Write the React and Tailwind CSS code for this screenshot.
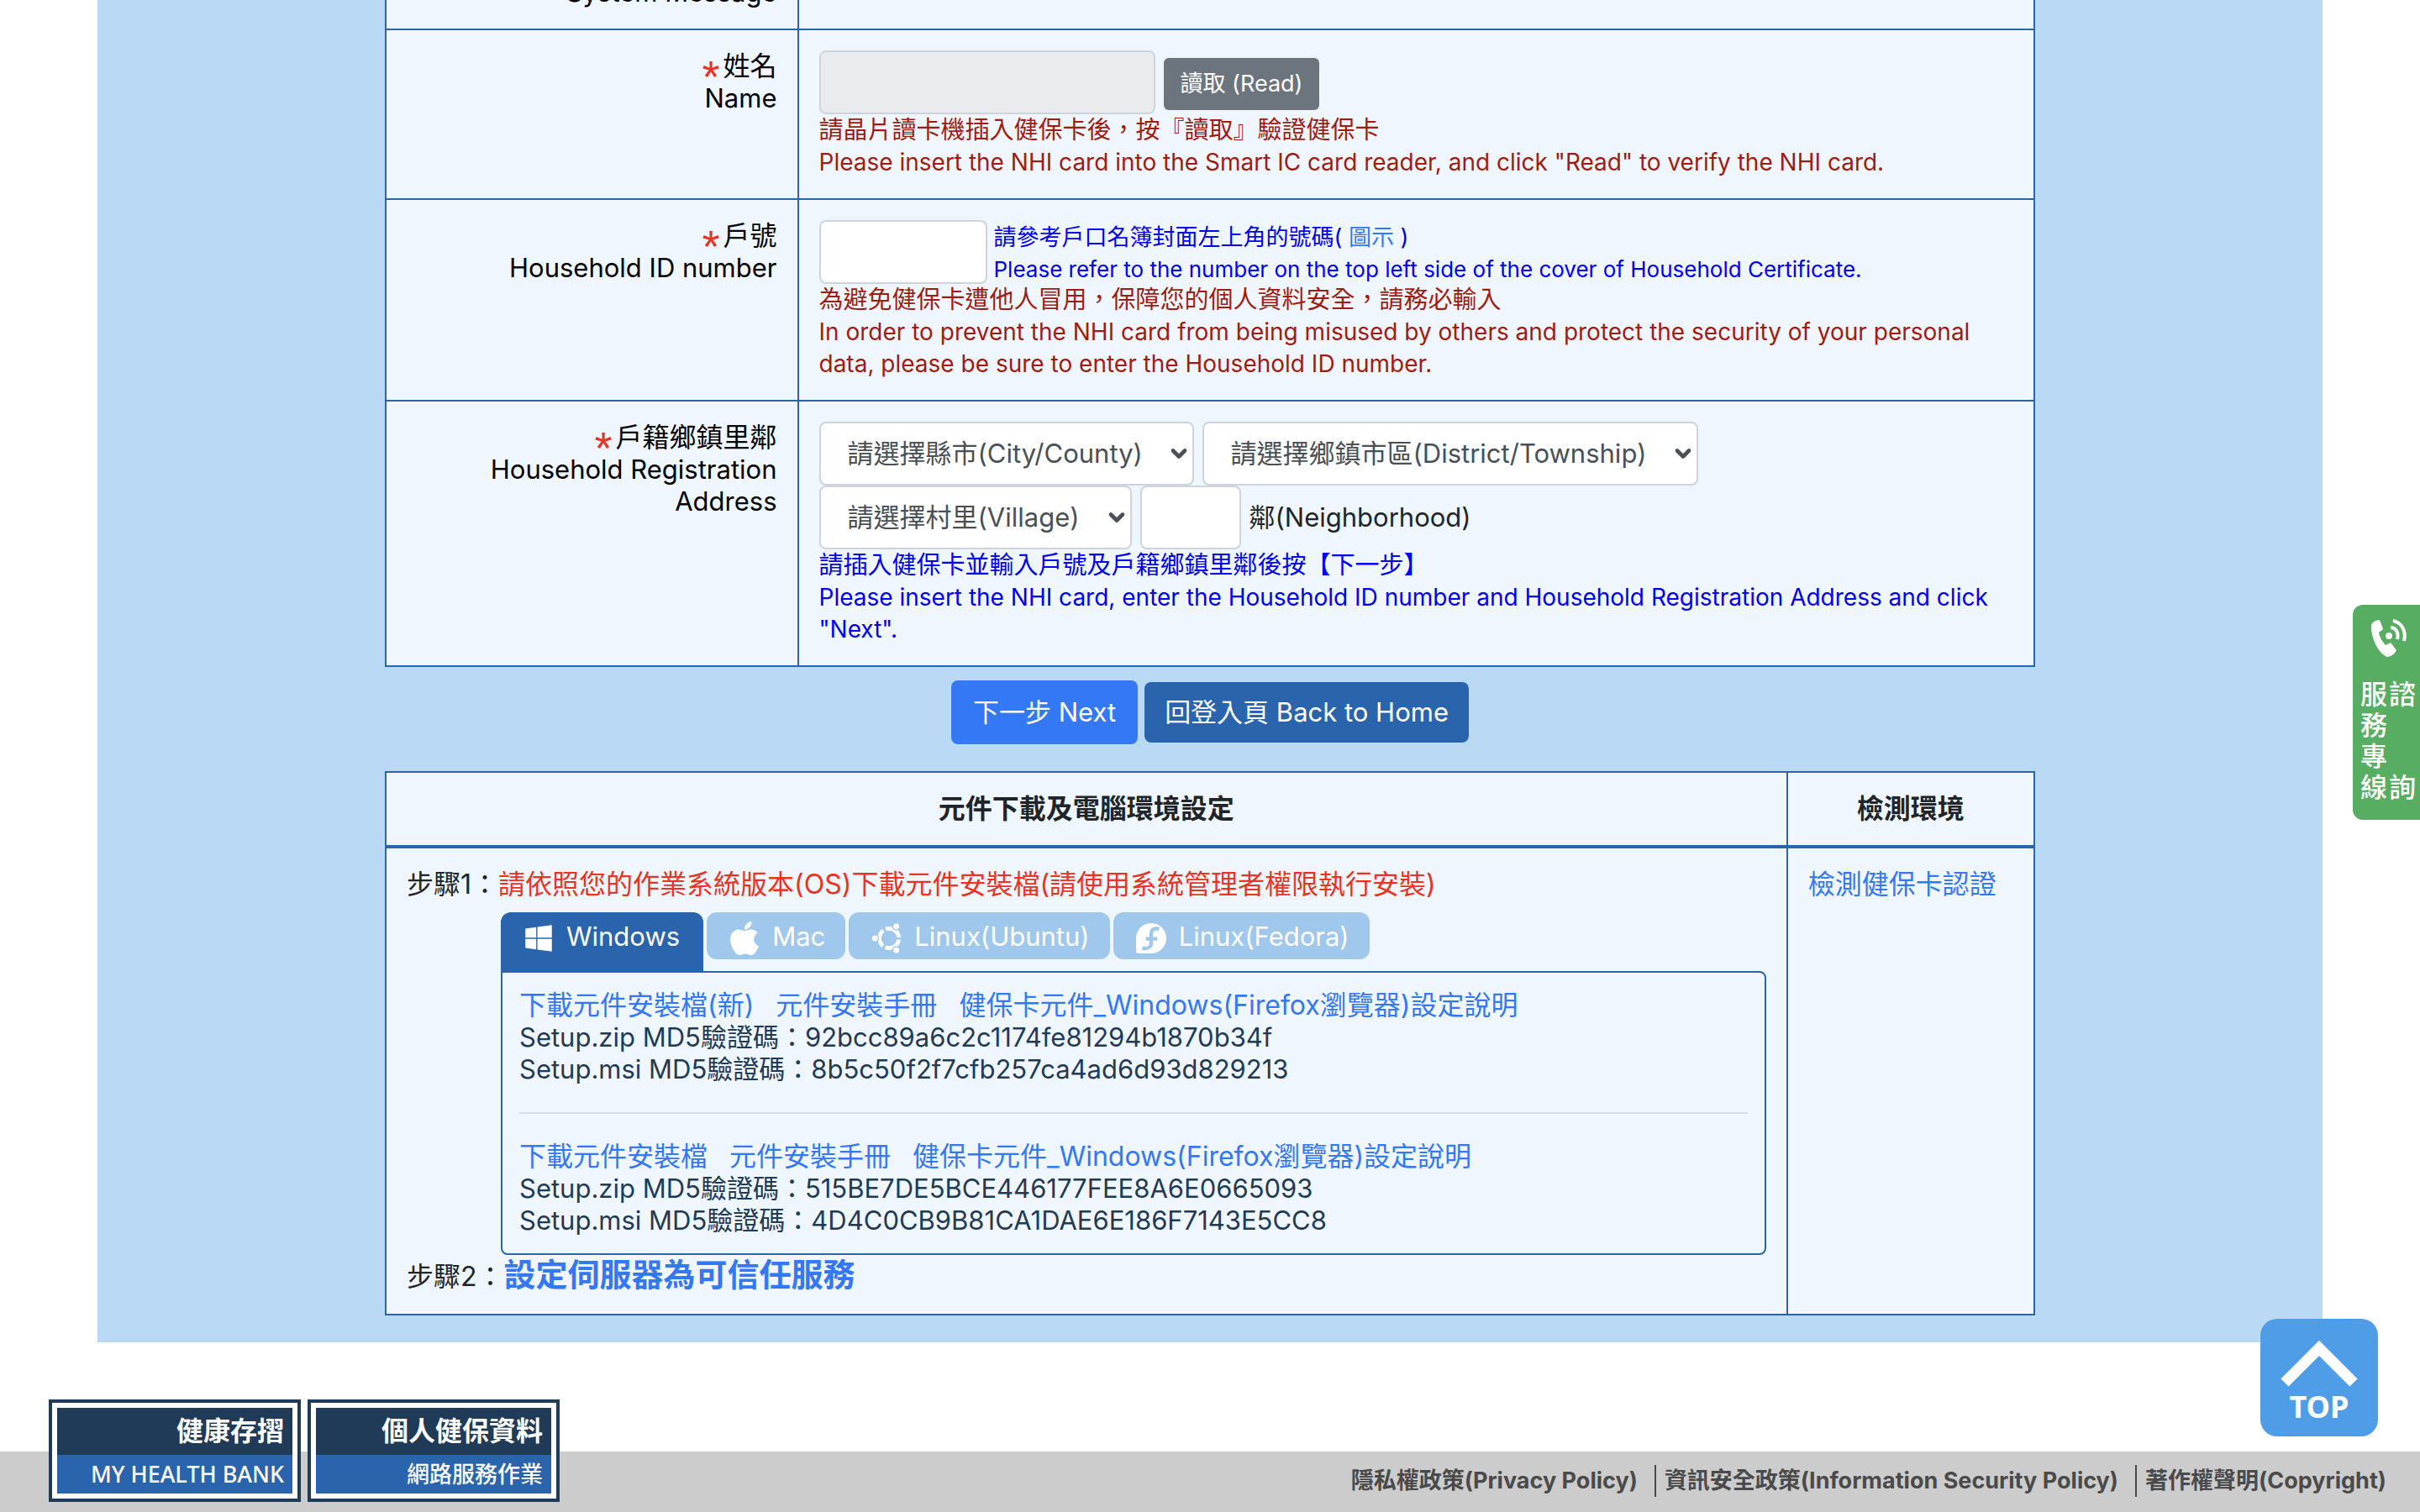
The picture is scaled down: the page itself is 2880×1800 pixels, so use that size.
import { FaApple, FaWindows } from "react-icons/fa";
import { FiChevronDown } from "react-icons/fi";

function UbuntuIcon({ className }) {
  return (
    <svg viewBox="0 0 34 34" className={className} fill="none">
      <circle
        cx="20"
        cy="17"
        r="11"
        stroke="currentColor"
        strokeWidth="4.5"
        strokeDasharray="20 3.04"
        strokeDashoffset="-1.5"
      />
      <g fill="currentColor" stroke="#9fc8ec" strokeWidth="1.5">
        <circle cx="4" cy="17" r="4" />
        <circle cx="28" cy="3.5" r="4" />
        <circle cx="28" cy="30.5" r="4" />
      </g>
    </svg>
  );
}

function FedoraIcon({ className }) {
  return (
    <svg viewBox="0 0 34 34" className={className} fill="none">
      <path
        d="M17 0a17 17 0 1 1 0 34H3a3 3 0 0 1-3-3V17A17 17 0 0 1 17 0Z"
        fill="currentColor"
      />
      <path
        d="M26 6.500c-6-1.500-9 1-9 6V22c0 5-4 7.500-10 6M11 17.500h13"
        stroke="#9fc8ec"
        strokeWidth="4"
      />
    </svg>
  );
}

const TABS = [
  { id: "windows", label: "Windows", icon: FaWindows },
  { id: "mac", label: "Mac", icon: FaApple },
  { id: "ubuntu", label: "Linux(Ubuntu)", icon: UbuntuIcon },
  { id: "fedora", label: "Linux(Fedora)", icon: FedoraIcon },
];

const DOWNLOADS = [
  {
    file: "下載元件安裝檔(新)",
    zip: "92bcc89a6c2c1174fe81294b1870b34f",
    msi: "8b5c50f2f7cfb257ca4ad6d93d829213",
  },
  {
    file: "下載元件安裝檔",
    zip: "515BE7DE5BCE446177FEE8A6E0665093",
    msi: "4D4C0CB9B81CA1DAE6E186F7143E5CC8",
  },
];

const POLICIES = [
  "隱私權政策(Privacy Policy)",
  "資訊安全政策(Information Security Policy)",
  "著作權聲明(Copyright)",
];

function FieldRow({ zh, en, htmlFor, required = true, children }) {
  return (
    <tr>
      <th
        scope="row"
        className="w-1/4 border-2 border-[#2a64ad] p-6 text-right align-top font-normal text-black"
      >
        <label htmlFor={htmlFor}>
          <span className="block">
            {required && (
              <span className="mr-1 align-[-20px] font-['Liberation_Sans',sans-serif] text-[54px] leading-[0px] text-[#ea3323]">
                *
              </span>
            )}
            {zh}
          </span>
          <span className="block text-[31px]">{en}</span>
        </label>
      </th>
      <td className="border-2 border-[#2a64ad] p-6 align-top">{children}</td>
    </tr>
  );
}

function Hint({ zh, en, className }) {
  return (
    <div className={className}>
      <p className="text-[29px]">{zh}</p>
      <p className="text-[28px]">{en}</p>
    </div>
  );
}

function Select({ label, placeholder, className }) {
  return (
    <div className={`relative ${className}`}>
      <select
        aria-label={label}
        className="h-[76px] w-full appearance-none rounded-lg border-2 border-[#ced4da] bg-white pl-8 text-[31px] text-[#495057]"
      >
        <option>{placeholder}</option>
      </select>
      <FiChevronDown
        strokeWidth={4}
        className="pointer-events-none absolute top-6 right-1 size-7 text-[#495057]"
      />
    </div>
  );
}

function RegisterTable() {
  return (
    <table className="-mt-[92px] w-full border-collapse bg-[#eff6fd]">
      <tbody>
        <FieldRow zh="系統訊息" en="System Message" required={false} />
        <FieldRow zh="姓名" en="Name" htmlFor="name">
          <div className="flex items-center gap-[10px]">
            <input
              id="name"
              disabled
              className="h-[76px] w-[400px] rounded-lg border-2 border-[#ced4da] bg-[#eaebef] px-6"
            />
            <button className="mt-1 h-[62px] rounded-md bg-[#6c757d] px-5 text-[27px] text-white">
              讀取 (Read)
            </button>
          </div>
          <Hint
            zh="請晶片讀卡機插入健保卡後，按『讀取』驗證健保卡"
            en='Please insert the NHI card into the Smart IC card reader, and click "Read" to verify the NHI card.'
            className="text-[#a01c12]"
          />
        </FieldRow>
        <FieldRow zh="戶號" en="Household ID number" htmlFor="household">
          <div className="flex items-center gap-2">
            <input
              id="household"
              className="h-[76px] w-[200px] rounded-lg border-2 border-[#ced4da] bg-white px-6"
            />
            <div className="h-[76px] pt-[2px] text-[#0000f5]">
              <p className="text-[27px]">
                請參考戶口名簿封面左上角的號碼({" "}
                <a href="#sample" className="text-[#3478f6]">
                  圖示
                </a>{" "}
                )
              </p>
              <p className="text-[26px]">
                Please refer to the number on the top left side of the cover of
                Household Certificate.
              </p>
            </div>
          </div>
          <Hint
            zh="為避免健保卡遭他人冒用，保障您的個人資料安全，請務必輸入"
            en="In order to prevent the NHI card from being misused by others and protect the security of your personal data, please be sure to enter the Household ID number."
            className="text-[#a01c12]"
          />
        </FieldRow>
        <FieldRow
          zh="戶籍鄉鎮里鄰"
          en="Household Registration Address"
          htmlFor="neighborhood"
        >
          <div className="flex gap-[10px]">
            <Select
              label="縣市"
              placeholder="請選擇縣市(City/County)"
              className="w-[446px]"
            />
            <Select
              label="鄉鎮市區"
              placeholder="請選擇鄉鎮市區(District/Township)"
              className="w-[590px]"
            />
          </div>
          <div className="flex items-center gap-[10px]">
            <Select
              label="村里"
              placeholder="請選擇村里(Village)"
              className="w-[372px]"
            />
            <input
              id="neighborhood"
              className="h-[76px] w-[120px] rounded-lg border-2 border-[#ced4da] bg-white px-6"
            />
            <span className="text-[31px]">鄰(Neighborhood)</span>
          </div>
          <Hint
            zh="請插入健保卡並輸入戶號及戶籍鄉鎮里鄰後按【下一步】"
            en='Please insert the NHI card, enter the Household ID number and Household Registration Address and click "Next".'
            className="text-[#0000f5]"
          />
        </FieldRow>
      </tbody>
    </table>
  );
}

function Download({ file, zip, msi }) {
  return (
    <div>
      <div className="flex gap-[26px] text-[#3478f6]">
        <a href="#setup">{file}</a>
        <a href="#manual">元件安裝手冊</a>
        <a href="#firefox">健保卡元件_Windows(Firefox瀏覽器)設定說明</a>
      </div>
      <p className="text-[31px]">Setup.zip MD5驗證碼：{zip}</p>
      <p className="text-[31px]">Setup.msi MD5驗證碼：{msi}</p>
    </div>
  );
}

function Tab({ label, icon: Icon, active }) {
  return (
    <button
      role="tab"
      aria-selected={active}
      className={
        active
          ? "flex h-[70px] items-start gap-4 rounded-t-xl bg-[#2a64ad] px-7 pt-[10px] text-[31px] text-white"
          : "flex h-14 items-start gap-4 rounded-xl bg-[#9fc8ec] pr-6 pl-7 pt-[10px] text-[31px] text-white"
      }
    >
      <span className="flex h-[42px] w-[34px] items-center justify-center">
        <Icon
          className={
            Icon === FaApple
              ? "h-[46px] w-[36px] shrink-0"
              : "size-[36px] shrink-0"
          }
        />
      </span>
      {label}
    </button>
  );
}

function SetupTable() {
  return (
    <table className="mt-8 w-full border-collapse border-2 border-[#2a64ad] bg-[#eff6fd]">
      <thead>
        <tr className="border-b-4 border-[#2a64ad]">
          <th className="border-r-2 border-[#2a64ad] p-6">
            元件下載及電腦環境設定
          </th>
          <th className="w-[15%] p-6">檢測環境</th>
        </tr>
      </thead>
      <tbody>
        <tr>
          <td className="border-r-2 border-[#2a64ad] p-6 align-top">
            <p>
              步驟1：
              <span className="text-[#ea3323]">
                請依照您的作業系統版本(OS)下載元件安裝檔(請使用系統管理者權限執行安裝)
              </span>
            </p>
            <div className="mt-[14px] ml-28">
              <div role="tablist" className="flex items-start gap-1">
                {TABS.map((tab, i) => (
                  <Tab key={tab.id} {...tab} active={i === 0} />
                ))}
              </div>
              <div
                role="tabpanel"
                className="rounded-lg rounded-tl-none border-2 border-[#2a64ad] p-5 text-[#1f3b57]"
              >
                <Download {...DOWNLOADS[0]} />
                <hr className="my-8 border-t-2 border-[#d7dde5]" />
                <Download {...DOWNLOADS[1]} />
              </div>
            </div>
            <p className="h-[46px] leading-[46px]">
              步驟2：
              <a href="#trust" className="text-[38px] font-bold text-[#3478f6]">
                設定伺服器為可信任服務
              </a>
            </p>
          </td>
          <td className="p-6 align-top">
            <a href="#check" className="text-[#3478f6]">
              檢測健保卡認證
            </a>
          </td>
        </tr>
      </tbody>
    </table>
  );
}

function SiteCard({ title, subtitle }) {
  return (
    <a
      href="#site"
      className="block w-[300px] border-4 border-[#1f3b57] bg-white p-[6px] text-right text-white"
    >
      <span className="block h-14 bg-[#1f3b57] px-[10px] leading-[56px] font-bold">
        {title}
      </span>
      <span className="block h-[46px] bg-[#2a64ad] px-[10px] font-['Noto_Sans','Noto_Sans_CJK_TC',sans-serif] text-[27px] leading-[46px] font-medium">
        {subtitle}
      </span>
    </a>
  );
}

function Footer() {
  return (
    <footer className="mt-[130px] flex h-[72px] items-start justify-between bg-[#cccccc] pr-10 pl-[58px]">
      <div className="-mt-[62px] flex gap-2">
        <SiteCard title="健康存摺" subtitle="MY HEALTH BANK" />
        <SiteCard title="個人健保資料" subtitle="網路服務作業" />
      </div>
      <nav className="mt-4 flex divide-x-2 divide-[#4a4a4a] text-[27px] font-bold text-[#4a4a4a]">
        {POLICIES.map((name) => (
          <a key={name} href="#policy" className="pr-5 pl-[10px] last:pr-0">
            {name}
          </a>
        ))}
      </nav>
    </footer>
  );
}

function Hotline() {
  return (
    <a
      href="#hotline"
      aria-label="諮詢服務專線"
      className="fixed top-[720px] right-0 flex h-64 w-20 flex-col items-center rounded-l-xl bg-[#57ae63] pt-4 pl-1 text-white"
    >
      <svg viewBox="0 0 48 48" className="size-12" fill="none">
        <path
          d="M4 8c2-4 6-6 10-6l4 11-5 4c1 6 4 11 8 15l6-3 7 9c-2 4-6 8-11 8C12 42 3 22 4 8Z"
          fill="currentColor"
        />
        <circle cx="25" cy="21" r="4" fill="currentColor" />
        <path
          d="M27 11c6 0 10 6 8 14M30 3c10 2 16 12 13 24"
          stroke="currentColor"
          strokeWidth="4"
        />
      </svg>
      <span className="mt-[22px] grid grid-cols-2 gap-x-[2px] font-['Noto_Sans_CJK_TC',sans-serif] leading-[37px] font-medium">
        <span>服</span>
        <span>諮</span>
        <span className="col-span-2">務</span>
        <span className="col-span-2">專</span>
        <span>線</span>
        <span>詢</span>
      </span>
    </a>
  );
}

function TopButton() {
  return (
    <button className="fixed right-[50px] bottom-[90px] flex size-[140px] flex-col items-center rounded-[20px] bg-[#4e9de6] pt-[26px] text-white">
      <svg viewBox="0 0 92 58" className="h-[58px] w-[92px]" fill="none">
        <path d="M5 50 46 9l41 41" stroke="currentColor" strokeWidth="13" />
      </svg>
      <span className="font-['Noto_Sans',sans-serif] text-[36px] leading-[42px] font-bold">
        TOP
      </span>
    </button>
  );
}

export default function App() {
  return (
    <div className="min-h-screen overflow-hidden bg-white font-['Inter','Noto_Sans_CJK_TC',sans-serif] text-[32px] leading-[38px] text-[#212529]">
      <main className="mx-[116px] bg-[#b9d9f5] px-[342px] pb-8">
        <RegisterTable />
        <div className="mt-4 flex items-center justify-center gap-2 text-[31px] text-white">
          <button className="h-[76px] rounded-lg bg-[#3478f6] px-[26px]">
            下一步 Next
          </button>
          <button className="h-[72px] rounded-lg bg-[#2a64ad] px-6">
            回登入頁 Back to Home
          </button>
        </div>
        <SetupTable />
      </main>
      <Footer />
      <Hotline />
      <TopButton />
    </div>
  );
}
